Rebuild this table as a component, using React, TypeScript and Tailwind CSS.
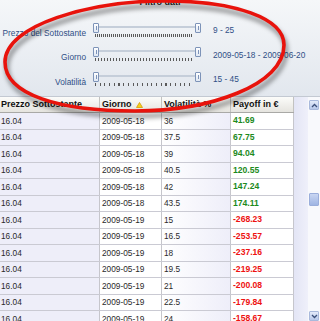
import React from 'react';

const FONT = "font-['Liberation_Sans',Arial,sans-serif]";

const SLIDERS = [
  { label: 'Prezzo del Sottostante', value: '9 - 25', ticks: 'bg-[repeating-linear-gradient(90deg,#5a5a5a_0_1px,transparent_1px_2px)]' },
  { label: 'Giorno', value: '2009-05-18 - 2009-06-20', ticks: 'bg-[repeating-linear-gradient(90deg,#5a5a5a_0_1px,transparent_1px_3px)]' },
  { label: 'Volatilità', value: '15 - 45', ticks: 'bg-[repeating-linear-gradient(90deg,#5a5a5a_0_1px,transparent_1px_4.7px)]' },
];

const ROWS: [string, string, string][] = [
  ['36', '2009-05-18', '41.69'],
  ['37.5', '2009-05-18', '67.75'],
  ['39', '2009-05-18', '94.04'],
  ['40.5', '2009-05-18', '120.55'],
  ['42', '2009-05-18', '147.24'],
  ['43.5', '2009-05-18', '174.11'],
  ['15', '2009-05-19', '-268.23'],
  ['16.5', '2009-05-19', '-253.57'],
  ['18', '2009-05-19', '-237.16'],
  ['19.5', '2009-05-19', '-219.25'],
  ['21', '2009-05-19', '-200.08'],
  ['22.5', '2009-05-19', '-179.84'],
  ['24', '2009-05-19', '-158.67'],
];

function Thumb() {
  return (
    <div className="w-[6px] h-[10px] rounded-[1px] border border-[#7d93b8] bg-gradient-to-b from-white to-[#dfe7f3] flex justify-center pt-[2px]">
      <div className="w-[1px] h-[4px] bg-[#7d93b8]" />
    </div>
  );
}

function Slider({ ticks }: { ticks: string }) {
  return (
    <div className="relative w-[108px] h-[15px]">
      <div className="absolute left-[5px] right-[5px] top-[3px] h-[2px] bg-[#c5ceda]" />
      <div className="absolute left-0 top-0"><Thumb /></div>
      <div className="absolute right-0 top-0"><Thumb /></div>
      <div className={`absolute left-[2px] right-[8px] top-[11px] h-[3px] ${ticks}`} />
    </div>
  );
}

function Arrow({ up }: { up?: boolean }) {
  return (
    <div className="w-[10px] h-[10px] rounded-[1px] bg-gradient-to-b from-[#e4ebfa] to-[#b8c8ea] border border-[#a9b9dc] flex items-center justify-center">
      <svg width="7" height="5" viewBox="0 0 7 5">
        <path d={up ? 'M1 4 L3.5 1.5 L6 4' : 'M1 1 L3.5 3.5 L6 1'} stroke="#3b4f7a" strokeWidth="1.3" fill="none" />
      </svg>
    </div>
  );
}

export default function App() {
  return (
    <div className={`relative w-[320px] h-[321px] overflow-hidden bg-white ${FONT}`}>
      {/* Filter panel */}
      <div className="h-[97px] bg-gradient-to-b from-[#f5f7f9] to-[#e2e7ee] border-b border-[#c3c9d2]">
        <div className="h-[18px] flex justify-center">
          <span className="block leading-[4px] text-[9px] font-bold text-[#222]">Filtro dati</span>
        </div>
        {SLIDERS.map(s => (
          <div key={s.label} className="flex items-center h-[24.5px]">
            <div className="w-[86px] text-right text-[8.3px] text-[#2f4f86] pt-[5px]">{s.label}</div>
            <div className="ml-[7px]"><Slider ticks={s.ticks} /></div>
            <div className="ml-[12px] text-[8.3px] text-[#2f4f86]">{s.value}</div>
          </div>
        ))}
      </div>

      {/* Grid */}
      <div className="flex">
        <div className="w-[294px]">
          <div className="flex h-[16px] bg-gradient-to-b from-[#fcfcfa] to-[#e5e4df] border-b border-[#a9a9a6] text-[9px] font-bold text-[#111]">
            <div className="w-[100px] border-r border-[#c2c2c0] pl-[1px] flex items-center">Prezzo Sottostante</div>
            <div className="w-[62px] border-r border-[#c2c2c0] pl-[2px] flex items-center gap-[4px]">
              Giorno
              <svg width="7" height="6" viewBox="0 0 7 6">
                <path d="M3.5 0.5 L6.5 5.5 L0.5 5.5 Z" fill="#f5d21b" stroke="#d49a0a" strokeWidth="0.8" />
              </svg>
            </div>
            <div className="w-[69px] border-r border-[#c2c2c0] pl-[2px] flex items-center">Volatilità %</div>
            <div className="w-[63px] border-r border-[#c2c2c0] pl-[2px] flex items-center">Payoff in €</div>
          </div>
          {ROWS.map(([vol, day, pay], i) => (
            <div key={i} className="flex h-[16.5px] border-b border-[#cacad3] text-[8.3px] text-[#2a2a2a]">
              <div className="w-[100px] border-r border-[#c6c6cc] bg-[#eeeef9] pl-[1px] flex items-center">16.04</div>
              <div className="w-[62px] border-r border-[#c6c6cc] bg-white pl-[2px] flex items-center">{day}</div>
              <div className="w-[69px] border-r border-[#c6c6cc] bg-gradient-to-r from-white to-[#eeeef9] pl-[2px] flex items-center">{vol}</div>
              <div className={`w-[63px] border-r border-[#c6c6cc] bg-white pl-[2px] flex items-center font-bold text-[8.6px] ${pay.startsWith('-') ? 'text-[#ee1111]' : 'text-[#1d8a1d]'}`}>{pay}</div>
            </div>
          ))}
        </div>
        <div className="w-[14px] h-[224px] bg-gradient-to-r from-[#e3e5f5] to-[#eff0fa]" />
        <div className="w-[12px] h-[224px] bg-[#f8f9fc] flex flex-col items-center">
          <div className="mt-[3px]"><Arrow up /></div>
          <div className="mt-[83px] w-[10px] h-[13px] rounded-[1px] bg-gradient-to-b from-[#c9d6f2] to-[#9fb5e3] border border-[#9aaedb]" />
          <div className="flex-1" />
          <Arrow />
        </div>
      </div>

      {/* Annotation ellipse */}
      <svg className="absolute left-0 top-0 pointer-events-none" width="320" height="321" viewBox="0 0 320 321">
        <defs>
          <filter id="shadow" x="-10%" y="-20%" width="120%" height="140%">
            <feGaussianBlur stdDeviation="2.2" />
          </filter>
        </defs>
        <path
          d="M 5 62 C 5 25, 90 1, 165 1 C 235 1, 284 18, 284 45 C 284 85, 210 111, 135 111 C 60 111, 5 95, 5 62 Z"
          transform="translate(2 5)"
          stroke="#000"
          strokeOpacity="0.35"
          strokeWidth="5"
          fill="none"
          filter="url(#shadow)"
        />
        <path
          d="M 5 62 C 5 25, 90 1, 165 1 C 235 1, 284 18, 284 45 C 284 85, 210 111, 135 111 C 60 111, 5 95, 5 62 Z"
          stroke="#e8130c"
          strokeWidth="3.6"
          fill="none"
        />
      </svg>
    </div>
  );
}
